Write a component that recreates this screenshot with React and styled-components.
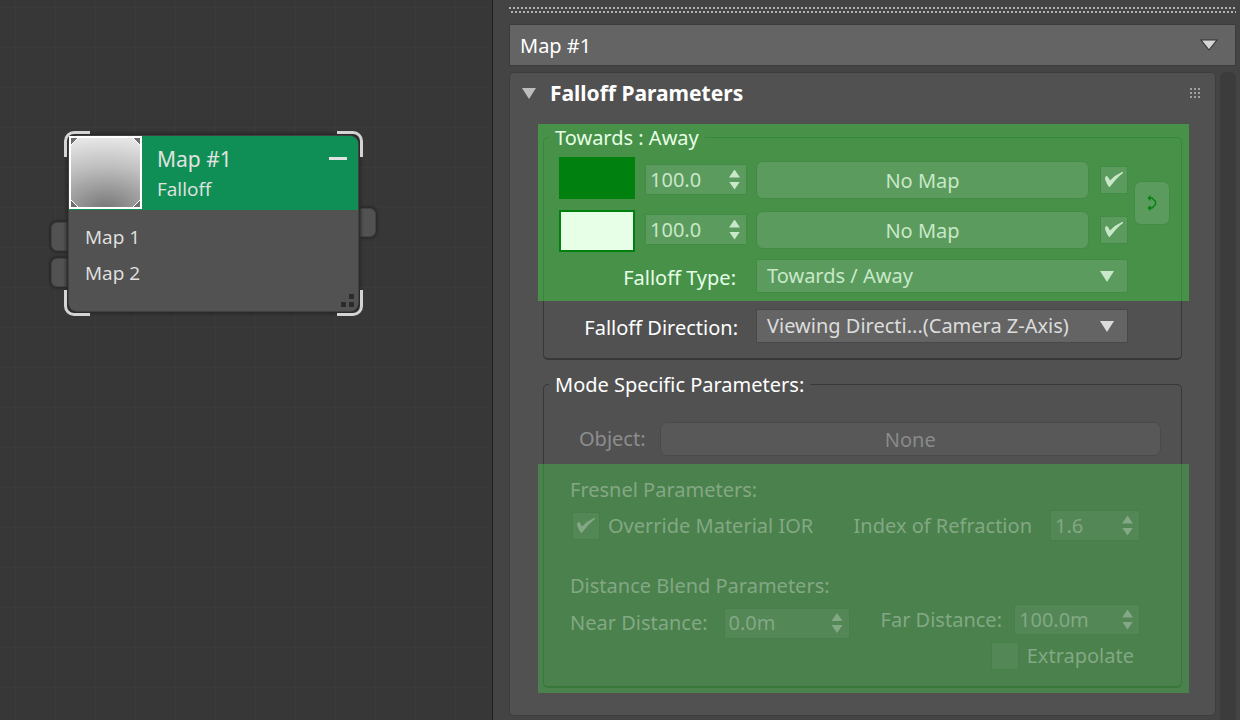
import React from 'react';
import styled, { createGlobalStyle, css, ThemeProvider } from 'styled-components';

const normal = {
  band: 'transparent', title: '#515151', line: '#383838', label: '#ffffff',
  control: '#646464', edge: '#484848', text: '#dcdcdc',
};
const disabled = { ...normal, label: '#8d8d8d', control: '#585858', edge: '#4a4a4a', text: '#8a8a8a' };
const green = {
  band: '#489149', title: '#489149', line: '#36893a', label: '#e6ffe6',
  control: '#5b9b5d', edge: '#438c45', text: '#c8e8c9',
};
const greenDisabled = {
  band: '#4b814c', title: '#4b814c', line: '#38783b', label: '#83a885',
  control: '#538755', edge: '#467f48', text: '#83a885',
};

const GlobalStyle = createGlobalStyle`
  *, *::before, *::after { box-sizing: border-box; }
  html, body, #root { height: 100%; margin: 0; }
  body {
    background: #383838;
    font: 20px/26px "Noto Sans", "Open Sans", sans-serif;
  }
  button, input, select { font: inherit; margin: 0; }
`;

const Window = styled.div`
  display: grid;
  grid-template-columns: minmax(380px, 492fr) minmax(0, 748fr);
  min-height: 100%;
`;

/* ---------- node canvas ---------- */

const Canvas = styled.main`
  position: relative;
  background:
    linear-gradient(90deg, #3a3a3a 1px, transparent 1px) 15px 7px / 40px 40px,
    linear-gradient(#3a3a3a 1px, #373737 1px) 15px 7px / 40px 40px;
`;

const Node = styled.article`
  position: absolute;
  left: 69px;
  top: 136px;
  width: 289px;
  border-radius: 8px;
  background: #525252;
  color: #e2e2e2;
  box-shadow: 0 0 0 1px #404040, 0 0 3px 3px #2a2a2a;
`;

const Socket = styled.span`
  position: absolute;
  z-index: -1;
  top: ${(p) => p.$top}px;
  ${(p) => (p.$side === 'left' ? 'left: -18px' : 'right: -18px')};
  width: 28px;
  height: 29px;
  border: 1px solid #434343;
  border-radius: 6px;
  background: #525252;
  box-shadow: 0 0 2px 2px #2c2c2c;
`;

const NodeLayer = styled.div`
  position: relative;
  z-index: 0;
`;

const Bracket = styled.span`
  position: absolute;
  width: 26px;
  height: 26px;
  border: 0 solid #d4d4d4;
  ${(p) => (p.$v === 'top'
    ? css`top: -5px; border-top-width: 3px;`
    : css`bottom: -5px; border-bottom-width: 3px;`)}
  ${(p) => (p.$h === 'left'
    ? css`left: -5px; border-left-width: 3px;`
    : css`right: -5px; border-right-width: 3px;`)}
  border-${(p) => p.$v}-${(p) => p.$h}-radius: 10px;
`;

const NodeHeader = styled.header`
  display: flex;
  height: 74px;
  border-radius: 0 8px 0 0;
  background: #0f8f55;
`;

const Thumb = styled.svg`
  flex: none;
  display: block;
  width: 73px;
  height: 73px;
`;

const NodeTitles = styled.div`
  flex: 1;
  padding: 8px 0 0 15px;
`;

const NodeName = styled.h2`
  margin: 0;
  font: 400 21px/30px "Noto Sans", sans-serif;
`;

const NodeKind = styled.p`
  margin: 0;
  font: 400 19px/30px "Open Sans", sans-serif;
`;

const Collapse = styled.button`
  align-self: flex-start;
  width: 18px;
  height: 3px;
  margin: 21px 11px 0 0;
  padding: 0;
  border: 0;
  background: #e2e2e2;
`;

const Inputs = styled.ul`
  list-style: none;
  margin: 0;
  padding: 9px 16px 20px;
  font: 400 19px/36px "Open Sans", sans-serif;
`;

const Grip = styled.svg`
  position: absolute;
  right: 3px;
  bottom: 3px;
  width: 14px;
  height: 14px;
`;

/* ---------- parameter panel ---------- */

const Panel = styled.aside`
  display: flex;
  flex-direction: column;
  padding: 7px 4px 4px 16px;
  border-left: 1px solid #1f1f1f;
  background: #444444;
`;

const DockGrip = styled.div`
  height: 6px;
  margin-bottom: 11px;
  background:
    repeating-linear-gradient(90deg, #b4b4b4 0 2px, transparent 2px 4px) 0 0 / 100% 2px no-repeat,
    repeating-linear-gradient(90deg, transparent 0 2px, #b4b4b4 2px 4px) 0 4px / 100% 2px no-repeat;
`;

const SelectBox = styled.div`
  display: grid;
  align-items: center;
  ${(p) => (p.$wide ? 'flex: none;' : 'flex: 0 1 372px; min-width: 0;')}
  > * { grid-area: 1 / 1; }
  > svg {
    justify-self: end;
    margin-right: ${(p) => (p.$wide ? 19 : 14)}px;
    pointer-events: none;
  }
`;

const Select = styled.select`
  appearance: none;
  width: 100%;
  height: ${(p) => (p.$wide ? 42 : 34)}px;
  padding: ${(p) => (p.$wide ? '2px' : 0)} 40px 0 10px;
  border: 1px solid ${(p) => (p.$wide ? '#3b3b3b' : p.theme.edge)};
  border-radius: 0;
  background: ${(p) => p.theme.control};
  color: ${(p) => (p.$wide ? p.theme.label : p.theme.text)};
  text-overflow: ellipsis;
`;

const Scroller = styled.div`
  display: flex;
  flex: 1;
  gap: 4px;
  margin-top: 6px;
`;

const ScrollTrack = styled.div`
  flex: none;
  width: 16px;
  margin-bottom: -4px;
  border-radius: 6px 6px 0 0;
  background: #3c3c3c;
`;

const Rollout = styled.section`
  flex: 1;
  min-width: 0;
  padding: 7px 26px 22px 28px;
  border: 1px solid #3d3d3d;
  border-radius: 5px;
  background: #515151;
`;

const RolloutHeader = styled.header`
  display: flex;
  align-items: center;
  gap: 14px;
  height: 26px;
  margin: 0 -11px 18px -16px;
  color: #fff;
`;

const RolloutToggle = styled.button`
  display: flex;
  padding: 0;
  border: 0;
  background: none;
`;

const RolloutTitle = styled.h1`
  flex: 1;
  margin: 0;
  font: 700 21px/26px "Noto Sans", sans-serif;
`;

const Band = styled.div`
  padding: ${(p) => p.$pad || '0'};
  padding-left: 5px;
  padding-right: 7px;
  background: ${(p) => p.theme.band};
`;

const Frame = styled.div`
  border: 0 solid ${(p) => p.theme.line};
  border-left-width: 1px;
  border-right-width: 1px;
  ${(p) => p.$top && css`border-top-width: 1px; border-radius: 5px 5px 0 0;`}
  ${(p) => p.$bottom && css`border-bottom-width: 2px; border-radius: 0 0 5px 5px;`}
  padding: ${(p) => p.$pad};
`;

const FrameTitle = styled.h3`
  width: fit-content;
  margin: -13px 0 0 5px;
  padding: 0 6px;
  background: ${(p) => p.theme.title};
  color: ${(p) => p.theme.label};
  font: inherit;
`;

const Group = styled.section`
  & + & { margin-top: 24px; }
`;

const MapSlots = styled.div`
  display: flex;
  align-items: center;
  padding: 6px 11px 0 15px;
`;

const Column = styled.div`
  display: flex;
  flex-direction: column;
  gap: ${(p) => p.$gap}px;
  margin-right: ${(p) => p.$after}px;
  ${(p) => p.$grow && 'flex: 1; min-width: 0;'}
`;

const Swatch = styled.button`
  width: 76px;
  height: 42px;
  padding: 0;
  border: 2px solid #00800f;
  background: ${(p) => p.$color};
`;

const SlotButton = styled.button`
  flex: ${(p) => (p.$grow ? 1 : 'none')};
  height: ${(p) => p.$h}px;
  padding: 2px 0 0;
  border: 1px solid ${(p) => p.theme.edge};
  border-radius: 7px;
  background: ${(p) => p.theme.control};
  color: ${(p) => p.theme.text};
`;

const SwapButton = styled(SlotButton)`
  display: grid;
  place-items: center;
  width: 36px;
  margin-bottom: 4px;
  padding: 0;
`;

const SpinBox = styled.div`
  display: flex;
  align-items: center;
  flex: none;
  width: ${(p) => p.$w}px;
  height: 31px;
  padding: 0 6px 0 4px;
  border: 1px solid ${(p) => p.theme.edge};
  background: ${(p) => p.theme.control};
`;

const SpinInput = styled.input`
  flex: 1;
  min-width: 0;
  height: 26px;
  padding: 0;
  border: 0;
  background: none;
  color: ${(p) => p.theme.text};
`;

const SpinArrows = styled.div`
  display: flex;
  flex-direction: column;
  gap: 4px;
  flex: none;
`;

const SpinArrow = styled.button`
  display: block;
  width: 11px;
  height: 8px;
  padding: 0;
  border: 0;
  background: ${(p) => p.theme.text};
  clip-path: polygon(${(p) => (p.$up ? '50% 0, 100% 100%, 0 100%' : '0 0, 100% 0, 50% 100%')});
`;

const CheckBox = styled.span`
  display: grid;
  place-items: center;
  flex: none;
  width: 28px;
  height: 28px;
  > * { grid-area: 1 / 1; }
  > svg { pointer-events: none; visibility: hidden; }
  > input:checked + svg { visibility: visible; }
`;

const CheckInput = styled.input`
  appearance: none;
  width: 28px;
  height: 28px;
  border: 1px solid ${(p) => p.theme.edge};
  background: ${(p) => p.theme.control};
`;

const CheckLabel = styled.label`
  display: flex;
  align-items: center;
  gap: 8px;
  color: ${(p) => p.theme.label};
`;

const FieldRow = styled.div`
  display: flex;
  align-items: center;
  justify-content: ${(p) => p.$justify || 'flex-start'};
  gap: ${(p) => p.$gap}px;
  padding: ${(p) => p.$pad};
`;

const FieldLabel = styled.label`
  flex: none;
  color: ${(p) => p.theme.label};
  white-space: nowrap;
`;

const SelectLabel = styled(FieldLabel)`
  padding-top: 4px;
`;

const SubTitle = styled.h4`
  margin: 0;
  padding-left: 26px;
  color: ${(p) => p.theme.label};
  font: inherit;
`;

const FarColumn = styled.div`
  display: flex;
  flex-direction: column;
  align-items: flex-end;
  gap: 7px;
`;

function Triangle({ width = 14, height = 11, color, outline }) {
  return (
    <svg width={width} height={height} viewBox="0 0 14 11" preserveAspectRatio="none" aria-hidden="true" overflow="visible">
      <path d="M0 0H14L7 11Z" fill={color} stroke={outline || 'none'} strokeWidth="1" />
    </svg>
  );
}

const TickShape = styled.path`
  fill: ${(p) => p.theme.text};
`;

function Tick() {
  return (
    <svg width="18" height="16" viewBox="0 0 18 16" aria-hidden="true">
      <TickShape d="M0 7L0.500 4.500L2 4Q3.800 5.500 5 8.500Q10 3 17 0H18V1Q14 4 10.700 7.700L5.500 14L4.300 15.300Q1.500 12 0 7Z" />
    </svg>
  );
}

function Check({ label, checked, off }) {
  return (
    <CheckBox>
      <CheckInput type="checkbox" defaultChecked={checked} disabled={off} aria-label={label} />
      <Tick />
    </CheckBox>
  );
}

function Spinner({ id, label, value, width, off }) {
  return (
    <SpinBox $w={width}>
      <SpinInput id={id} aria-label={label} defaultValue={value} disabled={off} />
      <SpinArrows>
        <SpinArrow $up aria-label="Increase" disabled={off} />
        <SpinArrow aria-label="Decrease" disabled={off} />
      </SpinArrows>
    </SpinBox>
  );
}

function DropDown({ id, label, value, wide, arrow }) {
  return (
    <SelectBox $wide={wide}>
      <Select id={id} $wide={wide} aria-label={label} defaultValue={value}>
        <option>{value}</option>
      </Select>
      {wide
        ? <Triangle width={16} height={10} color="#d6d6d6" outline="#333333" />
        : <Triangle color={arrow} />}
    </SelectBox>
  );
}

function FalloffNode() {
  return (
    <NodeLayer>
      <Node>
        <Socket $side="left" $top={86} />
        <Socket $side="left" $top={122} />
        <Socket $side="right" $top={72} />
        <NodeHeader>
          <Thumb viewBox="0 0 73 73" role="img" aria-label="Falloff preview">
            <defs>
              <radialGradient id="shade" cx="0.5" cy="1.05" r="1.05" gradientTransform="translate(-0.25 0) scale(1.5 1)">
                <stop offset="0" stopColor="#747474" />
                <stop offset="0.3" stopColor="#999999" />
                <stop offset="0.6" stopColor="#bebebe" />
                <stop offset="1" stopColor="#e6e6e6" />
              </radialGradient>
            </defs>
            <rect width="73" height="73" fill="#ffffff" />
            <rect x="2" y="2" width="69" height="69" fill="url(#shade)" />
            <path d="M2 2H9L2 9ZM71 2H64L71 9ZM2 71V64L9 71ZM71 71V64L64 71Z" fill="#6e6e6e" />
            <path d="M2 9L9 2M64 2L71 9M2 64L9 71M64 71L71 64" stroke="#ffffff" fill="none" />
            <rect x="1" y="1" width="71" height="71" fill="none" stroke="#ffffff" strokeWidth="2" />
          </Thumb>
          <NodeTitles>
            <NodeName>Map #1</NodeName>
            <NodeKind>Falloff</NodeKind>
          </NodeTitles>
          <Collapse aria-label="Collapse" />
        </NodeHeader>
        <Inputs>
          <li>Map 1</li>
          <li>Map 2</li>
        </Inputs>
        <Grip viewBox="0 0 14 14" aria-hidden="true">
          <path d="M8 0h5v5H8zM0 8h5v5H0zM8 8h5v5H8z" fill="#2b2b2b" />
        </Grip>
        <Bracket $v="top" $h="left" />
        <Bracket $v="top" $h="right" />
        <Bracket $v="bottom" $h="left" />
        <Bracket $v="bottom" $h="right" />
      </Node>
    </NodeLayer>
  );
}

function FalloffGroup() {
  return (
    <Group aria-labelledby="towards-title">
      <ThemeProvider theme={green}>
        <Band $pad="13px 0 0">
          <Frame $top $pad="0 0 8px">
            <FrameTitle id="towards-title">Towards : Away</FrameTitle>
            <MapSlots>
              <Column $gap={11} $after={10}>
                <Swatch $color="#00800f" aria-label="Towards color" />
                <Swatch $color="#e6ffe6" aria-label="Away color" />
              </Column>
              <Column $gap={19} $after={9}>
                <Spinner label="Towards amount" value="100.0" width={102} />
                <Spinner label="Away amount" value="100.0" width={102} />
              </Column>
              <Column $gap={12} $after={11} $grow>
                <SlotButton $h={38}>No Map</SlotButton>
                <SlotButton $h={38}>No Map</SlotButton>
              </Column>
              <Column $gap={22} $after={6}>
                <Check label="Use towards map" checked />
                <Check label="Use away map" checked />
              </Column>
              <SwapButton $h={44} aria-label="Swap colors">
                <svg width="10" height="16" viewBox="0 0 10 16" aria-hidden="true">
                  <path d="M3 3H5L8.500 6.500V9.500L5 13H3" fill="none" stroke="#00800f" strokeWidth="1.400" />
                  <path d="M0.500 3L3.500 0V6ZM0.500 13L3.500 10V16Z" fill="#00800f" />
                </svg>
              </SwapButton>
            </MapSlots>
            <FieldRow $justify="flex-end" $gap={20} $pad="7px 53px 0 0">
              <SelectLabel htmlFor="type">Falloff Type:</SelectLabel>
              <DropDown id="type" value="Towards / Away" arrow="#c8e8c9" />
            </FieldRow>
          </Frame>
        </Band>
      </ThemeProvider>
      <Band>
        <Frame $bottom $pad="8px 0 15px">
          <FieldRow $justify="flex-end" $gap={18} $pad="0 53px 0 0">
            <SelectLabel htmlFor="direction">Falloff Direction:</SelectLabel>
            <DropDown id="direction" value="Viewing Directi...(Camera Z-Axis)" arrow="#dcdcdc" />
          </FieldRow>
        </Frame>
      </Band>
    </Group>
  );
}

function ModeGroup() {
  return (
    <Group aria-labelledby="mode-title">
      <Band>
        <Frame $top $pad="0 0 8px">
          <FrameTitle id="mode-title">Mode Specific Parameters:</FrameTitle>
          <ThemeProvider theme={disabled}>
            <FieldRow $gap={14} $pad="24px 20px 0 35px">
              <FieldLabel as="span">Object:</FieldLabel>
              <SlotButton $h={34} $grow disabled>None</SlotButton>
            </FieldRow>
          </ThemeProvider>
        </Frame>
      </Band>
      <ThemeProvider theme={greenDisabled}>
        <Band $pad="0 0 5px">
          <Frame $bottom $pad="13px 0 16px">
            <SubTitle>Fresnel Parameters:</SubTitle>
            <FieldRow $justify="space-between" $gap={16} $pad="7px 41px 0 28px">
              <CheckLabel>
                <Check checked off label="Override Material IOR" />
                Override Material IOR
              </CheckLabel>
              <FieldRow $gap={18} $pad="0">
                <FieldLabel htmlFor="ior">Index of Refraction</FieldLabel>
                <Spinner id="ior" value="1.6" width={90} off />
              </FieldRow>
            </FieldRow>
            <FieldRow $gap={0} $pad="32px 0 0">
              <SubTitle>Distance Blend Parameters:</SubTitle>
            </FieldRow>
            <FieldRow $justify="space-between" $gap={16} $pad="5px 41px 0 26px">
              <FieldRow $gap={16} $pad="0 0 28px">
                <FieldLabel htmlFor="near">Near Distance:</FieldLabel>
                <Spinner id="near" value="0.0m" width={126} off />
              </FieldRow>
              <FarColumn>
                <FieldRow $gap={12} $pad="0">
                  <FieldLabel htmlFor="far">Far Distance:</FieldLabel>
                  <Spinner id="far" value="100.0m" width={126} off />
                </FieldRow>
                <FieldRow $gap={0} $pad="0 6px 0 0">
                  <CheckLabel>
                    <Check off label="Extrapolate" />
                    Extrapolate
                  </CheckLabel>
                </FieldRow>
              </FarColumn>
            </FieldRow>
          </Frame>
        </Band>
      </ThemeProvider>
    </Group>
  );
}

export default function App() {
  return (
    <ThemeProvider theme={normal}>
      <GlobalStyle />
      <Window>
        <Canvas>
          <FalloffNode />
        </Canvas>
        <Panel>
          <DockGrip />
          <DropDown label="Map" value="Map #1" wide />
          <Scroller>
            <Rollout>
              <RolloutHeader>
                <RolloutToggle aria-label="Toggle rollout"><Triangle color="#bdbdbd" /></RolloutToggle>
                <RolloutTitle>Falloff Parameters</RolloutTitle>
                <svg width="10" height="10" viewBox="0 0 10 10" aria-hidden="true">
                  <path d="M0 0h2v2H0zM4 0h2v2H4zM8 0h2v2H8zM0 4h2v2H0zM4 4h2v2H4zM8 4h2v2H8zM0 8h2v2H0zM4 8h2v2H4zM8 8h2v2H8z" fill="#a0a0a0" />
                </svg>
              </RolloutHeader>
              <FalloffGroup />
              <ModeGroup />
            </Rollout>
            <ScrollTrack />
          </Scroller>
        </Panel>
      </Window>
    </ThemeProvider>
  );
}
